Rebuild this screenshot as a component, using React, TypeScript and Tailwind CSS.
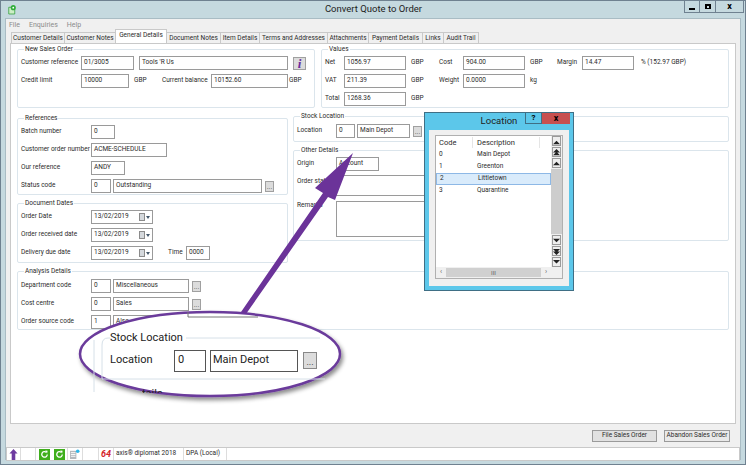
import type { ReactNode } from "react";

const tabs = [
  { label: "Customer Details", w: "w-[54px]" },
  { label: "Customer Notes", w: "w-[52px]" },
  { label: "General Details", w: "w-[52px]", active: true },
  { label: "Document Notes", w: "w-[55px]" },
  { label: "Item Details", w: "w-[40px]" },
  { label: "Terms and Addresses", w: "w-[69px]" },
  { label: "Attachments", w: "w-[42px]" },
  { label: "Payment Details", w: "w-[55px]" },
  { label: "Links", w: "w-[22px]" },
  { label: "Audit Trail", w: "w-[36px]" },
];

function Box({ w, value, className = "" }: { w: string; value?: string; className?: string }) {
  return (
    <div
      className={`${w} h-[14px] shrink-0 border border-[#9a9a9a] bg-white px-[2px] leading-[11px] overflow-hidden ${className}`}
    >
      {value}
    </div>
  );
}

function Dots({ className = "" }: { className?: string }) {
  return (
    <div
      className={`flex h-[11px] w-[9px] shrink-0 items-end justify-center border border-[#a0a0a0] bg-[#dcdcdc] text-[7px] leading-[8px] text-[#555] ${className}`}
    >
      ...
    </div>
  );
}

function Row({ label, w = "w-[70px]", children }: { label: string; w?: string; children?: ReactNode }) {
  return (
    <div className="mb-[4px] flex h-[14px] items-center">
      <div className={`${w} shrink-0`}>{label}</div>
      {children}
    </div>
  );
}

function Group({ title, className, children }: { title: string; className: string; children?: ReactNode }) {
  return (
    <fieldset className={`rounded-[2px] border border-[#dbe5ec] pl-[3px] ${className}`}>
      <legend className="ml-[3px] px-[1px] leading-[8px]">{title}</legend>
      {children}
    </fieldset>
  );
}

function DateBox({ value }: { value: string }) {
  return (
    <div className="flex h-[14px] w-[62px] shrink-0 items-center border border-[#9a9a9a] bg-white pl-[2px]">
      <span className="flex-1">{value}</span>
      <span className="mr-[1px] h-[8px] w-[6px] border border-[#8b8b8b] bg-[#d5d9dd]" />
      <span className="mr-[2px] h-0 w-0 border-x-[2.5px] border-t-[3px] border-x-transparent border-t-[#44586b]" />
    </div>
  );
}

function ScrollBtn({ d, className = "" }: { d: string; className?: string }) {
  return (
    <div className={`flex h-[10px] w-[9px] items-center justify-center border border-[#9a9a9a] bg-[#eeeeee] ${className}`}>
      <svg viewBox="0 0 8 8" className="h-[7px] w-[7px]">
        <path d={d} fill="#222" />
      </svg>
    </div>
  );
}

function StatusIcon() {
  return (
    <svg viewBox="0 0 12 12" className="h-[11px] w-[11px]">
      <rect width="12" height="12" fill="#3fae1c" />
      <path d="M9 6a3 3 0 1 1-1-2.3" fill="none" stroke="#fff" strokeWidth="1.4" />
      <path d="M6.8 1.6 9.4 2 8.8 4.8z" fill="#fff" />
    </svg>
  );
}

export default function App() {
  return (
    <div className="relative flex h-[465px] w-[746px] flex-col overflow-hidden border border-[#6f8190] bg-[#c5d9df] font-['Roboto','Liberation_Sans',Arial,sans-serif] text-[6.5px] whitespace-nowrap text-[#2b2b2b]">
      {/* title bar */}
      <div className="flex h-[17px] shrink-0 items-center">
        <svg viewBox="0 0 12 14" className="ml-[7px] h-[11px] w-[9px]">
          <path d="M1 4h8v9H1z" fill="#cdeec6" stroke="#2e9e35" />
          <circle cx="7" cy="4.5" r="3.4" fill="#2fae3a" />
          <circle cx="7" cy="4.5" r="1.2" fill="#fff" />
        </svg>
        <div className="flex-1 pl-[46px] text-center text-[9.5px] text-[#222]">Convert Quote to Order</div>
        <div className="mr-[1px] flex h-[12px] self-start">
          <div className="flex w-[16px] items-center justify-center border border-t-0 border-[#6f8190] pt-[4px]">
            <div className="h-[2px] w-[6px] bg-black" />
          </div>
          <div className="flex w-[16px] items-center justify-center border border-t-0 border-l-0 border-[#6f8190]">
            <div className="h-[5px] w-[6px] border-2 border-b border-black" />
          </div>
          <div className="flex w-[28px] items-center justify-center border border-t-0 border-l-0 border-[#6f8190] text-[9px] leading-none font-bold text-black">
            x
          </div>
        </div>
      </div>

      <div className="mx-[4px] flex min-h-0 flex-1 flex-col border border-b-0 border-[#a9bcc4] bg-[#f0f0f0]">
        {/* menu */}
        <div className="flex h-[13px] shrink-0 items-center gap-[9px] pl-[3px] text-[7px] text-[#8b8b8b]">
          <span>File</span>
          <span>Enquiries</span>
          <span>Help</span>
        </div>

        {/* tabs */}
        <div className="flex h-[11px] shrink-0 items-end pl-[5px]">
          {tabs.map((t) => (
            <div
              key={t.label}
              className={`${t.w} mr-[-1px] shrink-0 border border-[#c9c9c9] text-center ${
                t.active
                  ? "relative z-10 h-[14px] border-b-0 bg-white leading-[11px]"
                  : "h-[11px] border-b-0 bg-[#f0f0f0] leading-[10px]"
              }`}
            >
              {t.label}
            </div>
          ))}
        </div>

        {/* tab body */}
        <div className="mx-[4px] flex h-[381px] shrink-0 flex-col border border-[#c9c9c9] bg-white pt-[1px] pr-[6px] pl-[6px]">
          <div className="flex gap-[6px]">
            <Group title="New Sales Order" className="h-[63px] w-[298px] pt-[3px]">
              <Row label="Customer reference" w="w-[60px]">
                <Box w="w-[53px]" value="01/3005" />
                <Box w="w-[149px]" value="Tools 'R Us" className="ml-[5px]" />
                <div className="ml-[5px] flex h-[13px] w-[13px] items-center justify-center border border-[#a0a0a0] bg-[#dcdcdc] font-['Liberation_Serif',serif] text-[13px] leading-none font-bold text-[#6a2c9c] italic">
                  i
                </div>
              </Row>
              <Row label="Credit limit" w="w-[60px]">
                <Box w="w-[48px]" value="10000" />
                <span className="ml-[5px] w-[28px]">GBP</span>
                <span className="w-[49px]">Current balance</span>
                <Box w="w-[77px]" value="10152.60" />
                <span className="ml-[1px]">GBP</span>
              </Row>
            </Group>
            <Group title="Values" className="h-[63px] flex-1 pt-[3px]">
              <Row label="Net" w="w-[19px]">
                <Box w="w-[62px]" value="1056.97" />
                <span className="ml-[5px] w-[28px]">GBP</span>
                <span className="w-[24px]">Cost</span>
                <Box w="w-[62px]" value="904.00" />
                <span className="ml-[5px] w-[27px]">GBP</span>
                <span className="w-[25px]">Margin</span>
                <Box w="w-[52px]" value="14.47" />
                <span className="ml-[7px]">% (152.97 GBP)</span>
              </Row>
              <Row label="VAT" w="w-[19px]">
                <Box w="w-[62px]" value="211.39" />
                <span className="ml-[5px] w-[28px]">GBP</span>
                <span className="w-[24px]">Weight</span>
                <Box w="w-[62px]" value="0.0000" />
                <span className="ml-[5px]">kg</span>
              </Row>
              <Row label="Total" w="w-[19px]">
                <Box w="w-[62px]" value="1268.36" />
                <span className="ml-[5px]">GBP</span>
              </Row>
            </Group>
          </div>

          <div className="mt-[6px] flex gap-[5px]">
            <div className="flex w-[271px] flex-col gap-[4px]">
              <Group title="References" className="h-[81px] pt-[3px]">
                <Row label="Batch number">
                  <Box w="w-[24px]" value="0" />
                </Row>
                <Row label="Customer order number">
                  <Box w="w-[76px]" value="ACME-SCHEDULE" />
                </Row>
                <Row label="Our reference">
                  <Box w="w-[34px]" value="ANDY" />
                </Row>
                <Row label="Status code">
                  <Box w="w-[20px]" value="0" />
                  <Box w="w-[149px]" value="Outstanding" className="ml-[2px]" />
                  <Dots className="ml-[3px]" />
                </Row>
              </Group>
              <Group title="Document Dates" className="h-[64px] pt-[3px]">
                <Row label="Order Date">
                  <DateBox value="13/02/2019" />
                </Row>
                <Row label="Order received date">
                  <DateBox value="13/02/2019" />
                </Row>
                <Row label="Delivery due date">
                  <DateBox value="13/02/2019" />
                  <span className="ml-[15px] w-[18px]">Time</span>
                  <Box w="w-[24px]" value="0000" />
                </Row>
              </Group>
            </div>
            <div className="mt-[-2px] flex flex-1 flex-col gap-[4px]">
              <Group title="Stock Location" className="h-[30px] pt-[4px]">
                <Row label="Location" w="w-[39px]">
                  <Box w="w-[19px]" value="0" />
                  <Box w="w-[53px]" value="Main Depot" className="ml-[2px]" />
                  <Dots className="ml-[3px]" />
                </Row>
              </Group>
              <Group title="Other Details" className="h-[95px] pt-[3px]">
                <Row label="Origin" w="w-[39px]">
                  <Box w="w-[43px]" value="Account" />
                </Row>
                <div className="flex">
                  <div className="w-[39px] pt-[2px]">Order status</div>
                  <Box w="w-[170px]" className="h-[21px]" />
                </div>
                <div className="mt-[5px] flex">
                  <div className="w-[39px]">Remarks</div>
                  <Box w="w-[170px]" className="h-[36px]" />
                </div>
              </Group>
            </div>
          </div>

          <Group title="Analysis Details" className="mt-[4px] h-[63px] pt-[4px]">
            <Row label="Department code">
              <Box w="w-[20px]" value="0" />
              <Box w="w-[76px]" value="Miscellaneous" className="ml-[2px]" />
              <Dots className="ml-[3px]" />
            </Row>
            <Row label="Cost centre">
              <Box w="w-[20px]" value="0" />
              <Box w="w-[76px]" value="Sales" className="ml-[2px]" />
              <Dots className="ml-[3px]" />
            </Row>
            <Row label="Order source code">
              <Box w="w-[20px]" value="1" />
              <Box w="w-[76px]" value="Also" className="ml-[2px]" />
            </Row>
          </Group>
        </div>

        {/* action buttons */}
        <div className="flex h-[23px] shrink-0 items-center justify-end gap-[7px] pr-[10px]">
          <div className="flex h-[12px] w-[65px] items-center justify-center border border-[#9a9a9a] bg-[#e1e1e1]">
            File Sales Order
          </div>
          <div className="flex h-[12px] w-[66px] items-center justify-center border border-[#9a9a9a] bg-[#e9e9e9]">
            Abandon Sales Order
          </div>
        </div>

        {/* status bar */}
        <div className="flex h-[14px] shrink-0 items-stretch divide-x divide-[#dddddd] border border-[#c9c9c9] bg-white">
          <div className="flex w-[14px] items-center justify-center">
            <svg viewBox="0 0 10 12" className="h-[11px] w-[9px]">
              <path d="M5 0 9.5 5H7v7H3V5H.5z" fill="#6d3aa0" />
            </svg>
          </div>
          <div className="w-[15px]" />
          <div className="flex w-[32px] items-center justify-center gap-[4px]">
            <StatusIcon />
            <StatusIcon />
          </div>
          <div className="flex w-[15px] items-center justify-center">
            <svg viewBox="0 0 11 11" className="h-[10px] w-[10px]">
              <path d="M0 2h7v9H0z" fill="#b4b8bc" />
              <path d="M1 4h5M1 6h5M1 8h5" stroke="#fff" />
              <circle cx="8.5" cy="2.5" r="2" fill="#2fb6e8" />
            </svg>
          </div>
          <div className="w-[16px]" />
          <div className="flex w-[15px] items-center justify-center text-[9px] leading-none font-bold text-[#d4242b] italic">
            64
          </div>
          <div className="flex w-[70px] items-center pl-[2px]">axis® diplomat 2018</div>
          <div className="flex w-[43px] items-center pl-[2px]">DPA (Local)</div>
          <div className="flex-1" />
        </div>
      </div>
      <div className="h-[4px] shrink-0" />

      {/* callout drawing */}
      <svg viewBox="0 0 746 465" className="pointer-events-none absolute top-[-1px] left-[-1px] h-[465px] w-[746px]">
        <defs>
          <filter id="sh" x="-10%" y="-20%" width="120%" height="150%">
            <feDropShadow dx="2" dy="3" stdDeviation="2" floodColor="#000" floodOpacity="0.45" />
          </filter>
        </defs>
        <ellipse cx="210" cy="354" rx="130" ry="42" fill="#fff" stroke="#6b3a9b" strokeWidth="2.5" filter="url(#sh)" />
        <path d="M241 312 323 193 315 188 353 153 335 200 328 197 246 314z" fill="#6b3399" />
        <path d="M94 340V392M102 379V345Q102 338 108 338H110M186 338H320M102 379H325" fill="none" stroke="#d6e0e8" />
        <path d="M188 312V317H258" fill="none" stroke="#777" />
      </svg>

      {/* callout content */}
      <div className="absolute top-[329px] left-[109px] flex flex-col text-[#222]">
        <div className="text-[11px] leading-[16px]">Stock Location</div>
        <div className="mt-[3px] flex h-[23px] items-center">
          <span className="w-[64px] text-[11px]">Location</span>
          <div className="flex h-[22px] w-[32px] items-center border border-[#555] pl-[3px] text-[11px]">0</div>
          <div className="ml-[4px] flex h-[22px] w-[88px] items-center border border-[#555] pl-[2px] text-[11px]">
            Main Depot
          </div>
          <div className="ml-[5px] flex h-[17px] w-[14px] items-end justify-center border border-[#888] bg-[#dcdcdc] text-[9px] leading-[12px]">
            ...
          </div>
        </div>
      </div>
      <div className="absolute top-[386px] left-[141px] h-[6px] overflow-hidden text-[11px] leading-[13px] text-[#222]">tails</div>

      {/* lookup dialog */}
      <div className="absolute top-[111px] left-[423px] flex h-[179px] w-[150px] flex-col border border-[#3f6f85] bg-[#5cc7ea]">
        <div className="relative flex h-[17px] shrink-0 items-center justify-center text-[9.5px] text-[#222]">
          Location
          <div className="absolute top-0 right-[3px] flex h-[11px]">
            <div className="flex w-[17px] items-center justify-center border border-t-0 border-[#3f6f85] text-[8px] font-bold text-black">?</div>
            <div className="flex w-[28px] items-center justify-center bg-[#c75050] text-[9px] leading-none font-bold text-black">x</div>
          </div>
        </div>
        <div className="mx-[4px] mb-[4px] flex flex-1 bg-[#f0f0f0] px-[6px] pt-[5px] pb-[7px]">
          <div className="flex flex-1 border border-[#b0b0b0] bg-white">
            <div className="flex min-w-0 flex-1 flex-col">
              <div className="flex h-[13px] shrink-0 items-center text-[7.5px]">
                <span className="w-[37px] border-r border-[#e5e5e5] pl-[3px]">Code</span>
                <span className="w-[67px] border-r border-[#e5e5e5] pl-[4px]">Description</span>
              </div>
              {[
                ["0", "Main Depot"],
                ["1", "Greenton"],
                ["2", "Littletown"],
                ["3", "Quarantine"],
              ].map(([code, desc]) => (
                <div
                  key={code}
                  className={`flex h-[12px] shrink-0 items-center ${
                    code === "2" ? "border border-[#8db8e6] bg-[#d9ebfb]" : ""
                  }`}
                >
                  <span className="w-[37px] pl-[3px]">{code}</span>
                  <span className="pl-[4px]">{desc}</span>
                </div>
              ))}
              <div className="mt-auto flex h-[11px] items-center bg-[#f0f0f0] text-[7px] text-[#666]">
                <span className="w-[10px] text-center">‹</span>
                <span className="flex h-[9px] flex-1 items-center justify-center bg-[#d0d0d0] text-[6px]">III</span>
                <span className="w-[10px] text-center">›</span>
              </div>
            </div>
            <div className="flex w-[11px] shrink-0 flex-col items-center gap-px bg-[#f0f0f0]">
              <ScrollBtn d="M0 2H8M4 3 0 7H8z" />
              <ScrollBtn d="M4 0 0 4H8zM4 3 0 7H8z" />
              <ScrollBtn d="M4 2 0 6H8z" />
              <div className="w-full flex-1 bg-[#cdcdcd]" />
              <ScrollBtn d="M4 6 0 2H8z" />
              <ScrollBtn d="M4 8 0 4H8zM4 5 0 1H8z" />
              <ScrollBtn d="M4 5 0 1H8zM0 6H8" className="mb-[11px]" />
            </div>
          </div>
        </div>
      </div>
    </div>
  );
}
